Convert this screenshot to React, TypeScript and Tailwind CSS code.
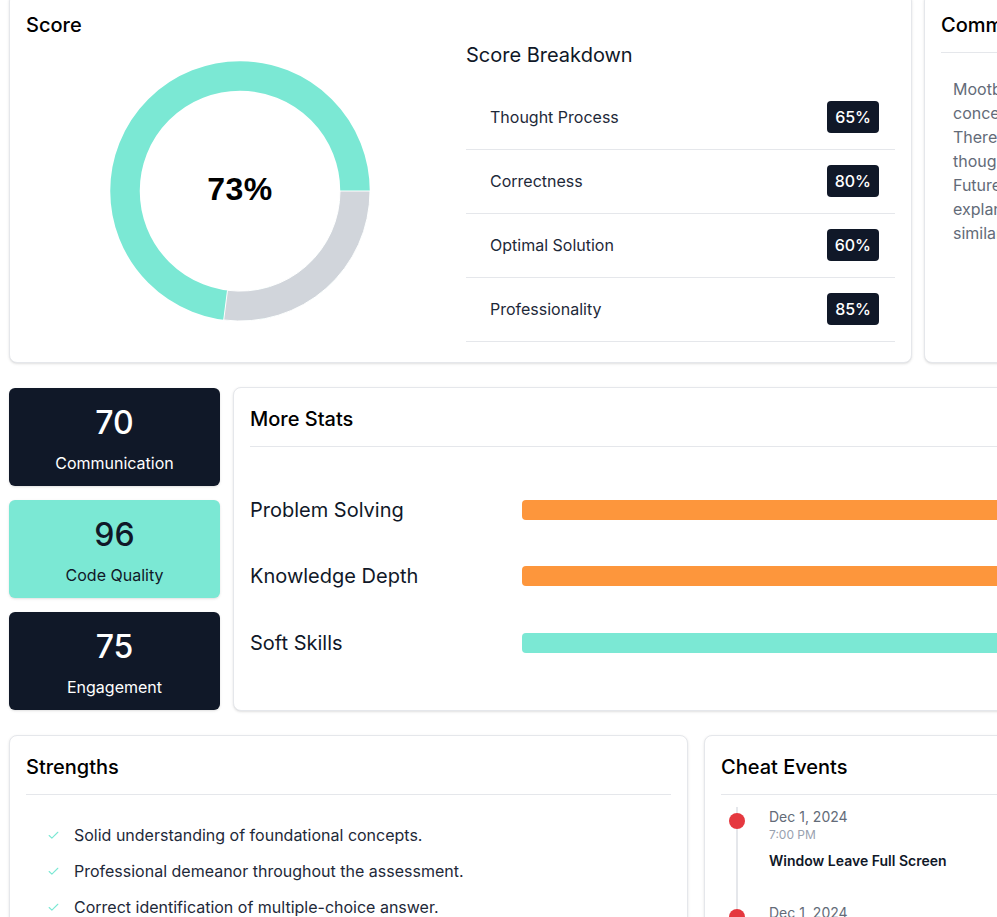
import React from 'react';
import { Check } from 'lucide-react';

const breakdown = [
  { label: 'Thought Process', value: '65%' },
  { label: 'Correctness', value: '80%' },
  { label: 'Optimal Solution', value: '60%' },
  { label: 'Professionality', value: '85%' },
];

const tiles = [
  { value: '70', label: 'Communication', light: false },
  { value: '96', label: 'Code Quality', light: true },
  { value: '75', label: 'Engagement', light: false },
];

const bars = [
  { label: 'Problem Solving', color: 'bg-[#fd963c]' },
  { label: 'Knowledge Depth', color: 'bg-[#fd963c]' },
  { label: 'Soft Skills', color: 'bg-[#7be8d4]' },
];

const strengths = [
  'Solid understanding of foundational concepts.',
  'Professional demeanor throughout the assessment.',
  'Correct identification of multiple-choice answer.',
];

const comments = ['Mootbot', 'concepts', 'There was', 'thought', 'Future', 'explanations', 'similar'];

function Donut() {
  return (
    <div className="relative w-[260px] h-[260px]">
      <svg width="260" height="260" viewBox="0 0 260 260">
        <circle cx="130" cy="130" r="115" fill="none" stroke="#7be8d4" strokeWidth="29.5" />
        <path
          d="M 260 130 A 130 130 0 0 1 113.7 259 L 117.5 229.3 A 100 100 0 0 0 230 130 Z"
          fill="#d1d5db"
          stroke="#ffffff"
          strokeWidth="1"
        />
      </svg>
      <div className="absolute inset-0 pb-1 flex items-center justify-center font-['Liberation_Sans',sans-serif] font-bold text-[32px] tracking-[0.5px] text-black">
        73%
      </div>
    </div>
  );
}

export default function App() {
  return (
    <div className="w-[997px] h-[917px] overflow-hidden bg-white font-['Inter',sans-serif]">
      <div className="w-[1500px] pl-[9px] -mt-[7px] flex flex-col gap-6">
        {/* Score + comments */}
        <div className="flex gap-3">
          <div className="w-[903px] h-[370px] shrink-0 bg-white border border-gray-200 rounded-lg shadow-sm p-4 flex">
            <div className="w-[440px] shrink-0">
              <h3 className="text-xl font-medium leading-[30px] text-black">Score</h3>
              <div className="ml-[84px] mt-[21px]">
                <Donut />
              </div>
            </div>
            <div className="flex-1 pt-[31px]">
              <h4 className="text-xl leading-7 text-gray-900">Score Breakdown</h4>
              <div className="mt-[17px] w-[429px]">
                {breakdown.map((row) => (
                  <div key={row.label} className="h-[64px] border-b border-gray-200 pl-6 pr-4 pb-0.5 flex items-center justify-between">
                    <span className="text-base text-gray-800">{row.label}</span>
                    <span className="h-8 px-2 rounded flex items-center bg-gray-900 text-white text-base font-medium">{row.value}</span>
                  </div>
                ))}
              </div>
            </div>
          </div>
          <div className="w-[500px] h-[370px] shrink-0 bg-white border border-gray-200 rounded-lg shadow-sm p-4">
            <h3 className="text-xl font-medium leading-[30px] text-black">Comments</h3>
            <div className="border-t border-gray-200 mt-3 pt-6 pl-3 text-base leading-6 text-[#636b78]">
              {comments.map((line) => (
                <div key={line}>{line}</div>
              ))}
            </div>
          </div>
        </div>

        {/* Tiles + more stats */}
        <div className="flex gap-[13px]">
          <div className="w-[211px] shrink-0 mt-px flex flex-col gap-[14px]">
            {tiles.map((tile) => (
              <div
                key={tile.label}
                className={`h-[98px] rounded-md shadow-sm flex flex-col items-center ${tile.light ? 'bg-[#7be8d4] text-gray-900' : 'bg-gray-900 text-white'}`}
              >
                <span className="text-[32px] font-medium leading-[40px] mt-[15px]">{tile.value}</span>
                <span className="text-base leading-6 mt-2">{tile.label}</span>
              </div>
            ))}
          </div>
          <div className="w-[1000px] h-[324px] bg-white border border-gray-200 rounded-lg shadow-sm p-4">
            <h3 className="text-xl font-medium leading-[30px] text-black">More Stats</h3>
            <div className="border-t border-gray-200 mt-3 pt-[52.8px] flex flex-col gap-[46.5px]">
              {bars.map((bar) => (
                <div key={bar.label} className="h-5 flex items-center">
                  <span className="w-[272px] shrink-0 text-xl text-gray-900">{bar.label}</span>
                  <div className={`w-[640px] h-5 rounded ${bar.color}`} />
                </div>
              ))}
            </div>
          </div>
        </div>

        {/* Strengths + cheat events */}
        <div className="flex gap-4">
          <div className="w-[679px] h-[400px] shrink-0 bg-white border border-gray-200 rounded-lg shadow-sm p-4">
            <h3 className="text-xl font-medium leading-[30px] text-black">Strengths</h3>
            <ul className="border-t border-gray-200 mt-3 pt-[28px] flex flex-col gap-3">
              {strengths.map((item) => (
                <li key={item} className="flex items-center text-base leading-6 text-gray-800">
                  <Check className="w-[13px] h-[13px] ml-[21px] mr-[14px] text-[#7be8d4]" />
                  {item}
                </li>
              ))}
            </ul>
          </div>
          <div className="w-[600px] h-[400px] shrink-0 bg-white border border-gray-200 rounded-lg shadow-sm p-4">
            <h3 className="text-xl font-medium leading-[30px] text-black">Cheat Events</h3>
            <div className="border-t border-gray-200 mt-3 pt-[12px]">
              <div className="relative pl-12">
                <div className="absolute left-[15px] top-0 bottom-0 w-0.5 bg-gray-200" />
                {[0, 1].map((i) => (
                  <div key={i} className="relative h-[96px]">
                    <span className="absolute -left-10 top-[6px] w-4 h-4 rounded-full bg-[#e5383f]" />
                    <div className="text-sm leading-5 text-[#636b78]">Dec 1, 2024</div>
                    <div className="text-xs leading-4 text-gray-400">7:00 PM</div>
                    <div className="text-sm leading-5 font-semibold text-gray-900 mt-2">Window Leave Full Screen</div>
                  </div>
                ))}
              </div>
            </div>
          </div>
        </div>
      </div>
    </div>
  );
}
